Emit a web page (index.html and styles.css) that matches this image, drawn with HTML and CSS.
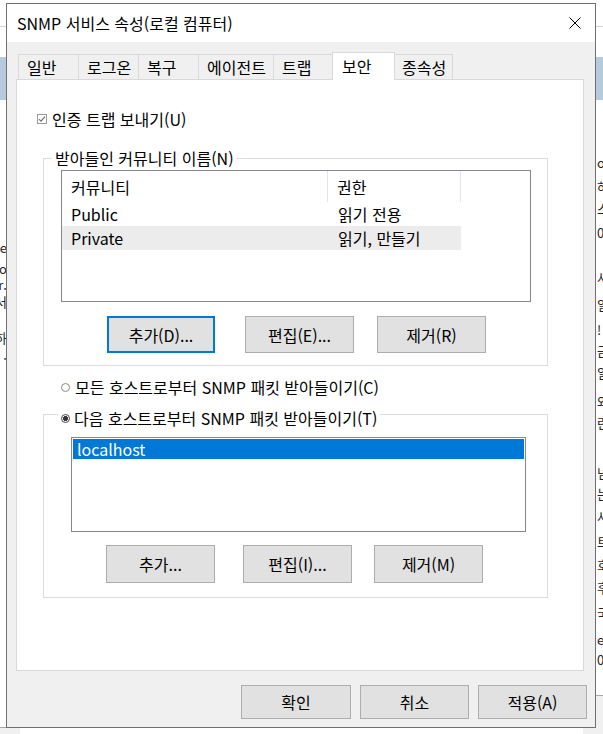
FILE: index.html
```html
<!DOCTYPE html>
<html lang="ko">
<head>
<meta charset="utf-8">
<title>SNMP 서비스 속성</title>
<link rel="stylesheet" href="styles.css">
</head>
<body>
<div class="desk">
  <div class="bgwin">
    <div class="bg-line top"></div>
    <div class="bg-band"></div>
    <div class="bg-foot left"></div>
    <div class="bg-foot right"></div>
    <span class="frag fl" style="top:241px">le</span>
    <span class="frag fl" style="top:262px">o</span>
    <span class="frag fl" style="top:278px">r.</span>
    <span class="frag fl" style="top:295px">서</span>
    <span class="frag fl" style="top:331px">하</span>
    <span class="frag fl" style="top:348px">.</span>
    <span class="frag fr" style="top:156px">o</span>
    <span class="frag fr" style="top:180px">하</span>
    <span class="frag fr" style="top:202px">스</span>
    <span class="frag fr" style="top:226px">0</span>
    <span class="frag fr" style="top:271px">사</span>
    <span class="frag fr" style="top:298px">일</span>
    <span class="frag fr" style="top:323px">!</span>
    <span class="frag fr" style="top:344px">금</span>
    <span class="frag fr" style="top:366px">일</span>
    <span class="frag fr" style="top:395px">와</span>
    <span class="frag fr" style="top:416px">란</span>
    <span class="frag fr" style="top:466px">넘</span>
    <span class="frag fr" style="top:487px">는</span>
    <span class="frag fr" style="top:510px">사</span>
    <span class="frag fr" style="top:535px">트</span>
    <span class="frag fr" style="top:558px">호</span>
    <span class="frag fr" style="top:581px">후</span>
    <span class="frag fr" style="top:606px">국</span>
    <span class="frag fr" style="top:633px">e</span>
    <span class="frag fr" style="top:653px">0</span>
  </div>

  <div class="dialog">
    <div class="titlebar">
      <span class="title">SNMP 서비스 속성(로컬 컴퓨터)</span>
      <svg class="close" width="12" height="12" viewBox="0 0 12 12" aria-hidden="true">
        <path d="M0.5 0.5 L11.5 11.5 M11.5 0.5 L0.5 11.5" stroke="#000" stroke-width="1" fill="none"/>
      </svg>
    </div>
    <div class="dlg-body">
      <div class="tabs">
        <div class="tab t1">일반</div>
        <div class="tab t2">로그온</div>
        <div class="tab t3">복구</div>
        <div class="tab t4">에이전트</div>
        <div class="tab t5">트랩</div>
        <div class="tab sel">보안</div>
        <div class="tab t7 last">종속성</div>
      </div>
      <div class="panel">
        <div class="check-row">
          <span class="checkbox">
            <svg width="8" height="8" viewBox="0 0 8 8" aria-hidden="true"><path d="M1 4.2 L3 6.2 L7 1.6" stroke="#6a6a6a" stroke-width="1.1" fill="none"/></svg>
          </span>
          <span>인증 트랩 보내기(U)</span>
        </div>

        <fieldset class="group g1">
          <legend>받아들인 커뮤니티 이름(N)</legend>
          <div class="listview">
            <div class="lv-head">
              <div class="hc c1">커뮤니티</div>
              <div class="hc c2">권한</div>
            </div>
            <div class="lv-row">
              <div class="c1">Public</div>
              <div class="c2">읽기 전용</div>
            </div>
            <div class="lv-row sel">
              <div class="c1">Private</div>
              <div class="c2">읽기, 만들기</div>
            </div>
          </div>
          <div class="btn-row r1">
            <button class="btn focus b1">추가(D)...</button>
            <button class="btn b2">편집(E)...</button>
            <button class="btn b3">제거(R)</button>
          </div>
        </fieldset>

        <div class="radio-row">
          <span class="radio"></span>
          <span>모든 호스트로부터 SNMP 패킷 받아들이기(C)</span>
        </div>

        <fieldset class="group g2">
          <legend><span class="radio on"></span><span>다음 호스트로부터 SNMP 패킷 받아들이기(T)</span></legend>
          <div class="listbox">
            <div class="lb-item sel">localhost</div>
          </div>
          <div class="btn-row r2">
            <button class="btn b1">추가...</button>
            <button class="btn b2">편집(I)...</button>
            <button class="btn b3">제거(M)</button>
          </div>
        </fieldset>
      </div>
      <div class="footer">
        <button class="btn fb">확인</button>
        <button class="btn fb">취소</button>
        <button class="btn fb">적용(A)</button>
      </div>
    </div>
  </div>
</div>
</body>
</html>
```

FILE: styles.css
```css
* { box-sizing: border-box; }
html, body { margin: 0; padding: 0; }
body {
  width: 603px;
  height: 734px;
  overflow: hidden;
  font-family: "Noto Sans CJK KR", "Noto Sans", sans-serif;
  font-size: 16px;
  color: #000;
  background: #fff;
}
.desk { position: relative; width: 603px; height: 734px; overflow: hidden; }

/* background window */
.bgwin { position: absolute; left: 0; top: 0; width: 603px; height: 734px; background: #fff; }
.bg-line.top { position: absolute; left: 0; right: 0; top: 26px; height: 1px; background: #d4d4d4; }
.bg-band { position: absolute; left: 0; right: 0; top: 57px; height: 43px; background: #b9c9dd; }
.bg-foot { position: absolute; background: #f0f0f0; border-top: 1px solid #a8a8a8; }
.bg-foot.left { left: 0; width: 20px; top: 727px; bottom: 0; }
.bg-foot.right { right: 0; width: 20px; top: 695px; bottom: 0; }
.frag { position: absolute; font-size: 13px; line-height: 13px; color: #222; white-space: nowrap; }
.frag.fl { right: 596px; }
.frag.fr { left: 597px; }

/* dialog window */
.dialog {
  position: absolute;
  left: 6px;
  top: 3px;
  width: 590px;
  height: 725px;
  border: 1px solid #707070;
  background: #f0f0f0;
  display: flex;
  flex-direction: column;
}
.titlebar {
  height: 38px;
  background: #fff;
  display: flex;
  align-items: center;
  padding-left: 10px;
  padding-right: 14px;
}
.title { flex: 1; line-height: 20px; white-space: nowrap; }
.close { display: block; }

.dlg-body { flex: 1; padding: 10px 0 0 9px; }

/* tabs */
.tabs {
  display: flex;
  align-items: flex-end;
  height: 28px;
  margin-left: 2px;
  margin-bottom: -1px;
  position: relative;
  z-index: 1;
}
.tab {
  height: 25px;
  margin-bottom: 1px;
  border-top: 1px solid #d9d9d9;
  border-left: 1px solid #d9d9d9;
  background: #f0f0f0;
  padding-left: 8px;
  line-height: 24px;
  white-space: nowrap;
}
.tab.last { border-right: 1px solid #d9d9d9; }
.t1, .t2, .t3 { width: 60px; }
.t4 { width: 75px; }
.t5 { width: 61px; }
.t7 { width: 60px; }
.tab.sel {
  width: 63px;
  height: 28px;
  margin: 0 -2px;
  background: #fff;
  border: 1px solid #d9d9d9;
  border-bottom: none;
  padding-left: 9px;
  line-height: 26px;
  position: relative;
  z-index: 2;
}

.panel {
  width: 568px;
  height: 592px;
  background: #fff;
  border: 1px solid #d9d9d9;
}

.check-row {
  display: flex;
  align-items: center;
  height: 20px;
  margin: 29px 0 0 20px;
  line-height: 20px;
}
.checkbox {
  width: 10px;
  height: 10px;
  border: 1px solid #9a9a9a;
  margin-right: 5px;
  display: flex;
  align-items: center;
  justify-content: center;
}
.checkbox svg { display: block; }

.group {
  margin: 0 0 0 26px;
  padding: 0;
  width: 505px;
  min-width: 0;
  border: 1px solid #dcdcdc;
}
.group legend {
  padding: 0 3px;
  line-height: 20px;
  height: 20px;
  white-space: nowrap;
}
.g1 { margin-top: 19px; padding-bottom: 12px; }
.g1 legend { margin-left: 8px; }
.g2 { margin-top: 3px; padding-bottom: 14px; }
.g2 legend {
  margin-left: 14px;
  height: 28px;
  padding-top: 8px;
  display: flex;
  align-items: center;
}

.listview {
  margin: 2px 0 0 17px;
  width: 470px;
  height: 132px;
  border: 1px solid #828790;
  background: #fff;
}
.lv-head { display: flex; height: 31px; }
.hc { line-height: 32px; white-space: nowrap; }
.hc.c1 { width: 266px; padding-left: 9px; border-right: 1px solid #e5e5e5; }
.hc.c2 { width: 133px; padding-left: 9px; border-right: 1px solid #e5e5e5; }
.lv-row { display: flex; width: 399px; height: 24px; line-height: 24px; }
.lv-row .c1 { width: 266px; padding-left: 9px; }
.lv-row .c2 { width: 133px; padding-left: 10px; }
.lv-row.sel { background: #ececec; }

.btn {
  font-family: inherit;
  font-size: 16px;
  color: #000;
  background: #e1e1e1;
  border: 1px solid #adadad;
  border-radius: 0;
  padding: 0;
  margin: 0;
  white-space: nowrap;
}
.btn.focus { border: 2px solid #0078d7; }

.btn-row { display: flex; }
.r1 { margin-top: 14px; padding-left: 63px; }
.r1 .btn { height: 37px; width: 109px; }
.r1 .b1 { width: 108px; }
.r1 .b2 { margin-left: 30px; }
.r1 .b3 { margin-left: 23px; }

.radio-row {
  display: flex;
  align-items: center;
  height: 20px;
  line-height: 20px;
  margin: 11px 0 0 44px;
}
.radio {
  width: 9px;
  height: 9px;
  border: 1px solid #8a8a8a;
  border-radius: 50%;
  margin-right: 5px;
  flex: none;
  background: #fff;
}
.radio.on {
  background: radial-gradient(circle, #333 0 2.2px, #fff 2.7px);
  border-color: #444;
  margin-right: 4px;
}

.listbox {
  margin: 9px 0 0 27px;
  width: 455px;
  height: 95px;
  border: 1px solid #828790;
  padding: 1px;
  background: #fff;
}
.lb-item { height: 20px; line-height: 20px; padding-left: 4px; }
.lb-item.sel { background: #0078d7; color: #fff; }

.r2 { margin-top: 13px; padding-left: 62px; }
.r2 .btn { height: 38px; width: 109px; }
.r2 .b2 { margin-left: 28px; }
.r2 .b3 { margin-left: 22px; }

.footer {
  display: flex;
  justify-content: flex-end;
  gap: 9px;
  margin-top: 14px;
  padding-right: 8px;
}
.fb { height: 34px; width: 109px; }
.fb:first-child { width: 110px; }
```
